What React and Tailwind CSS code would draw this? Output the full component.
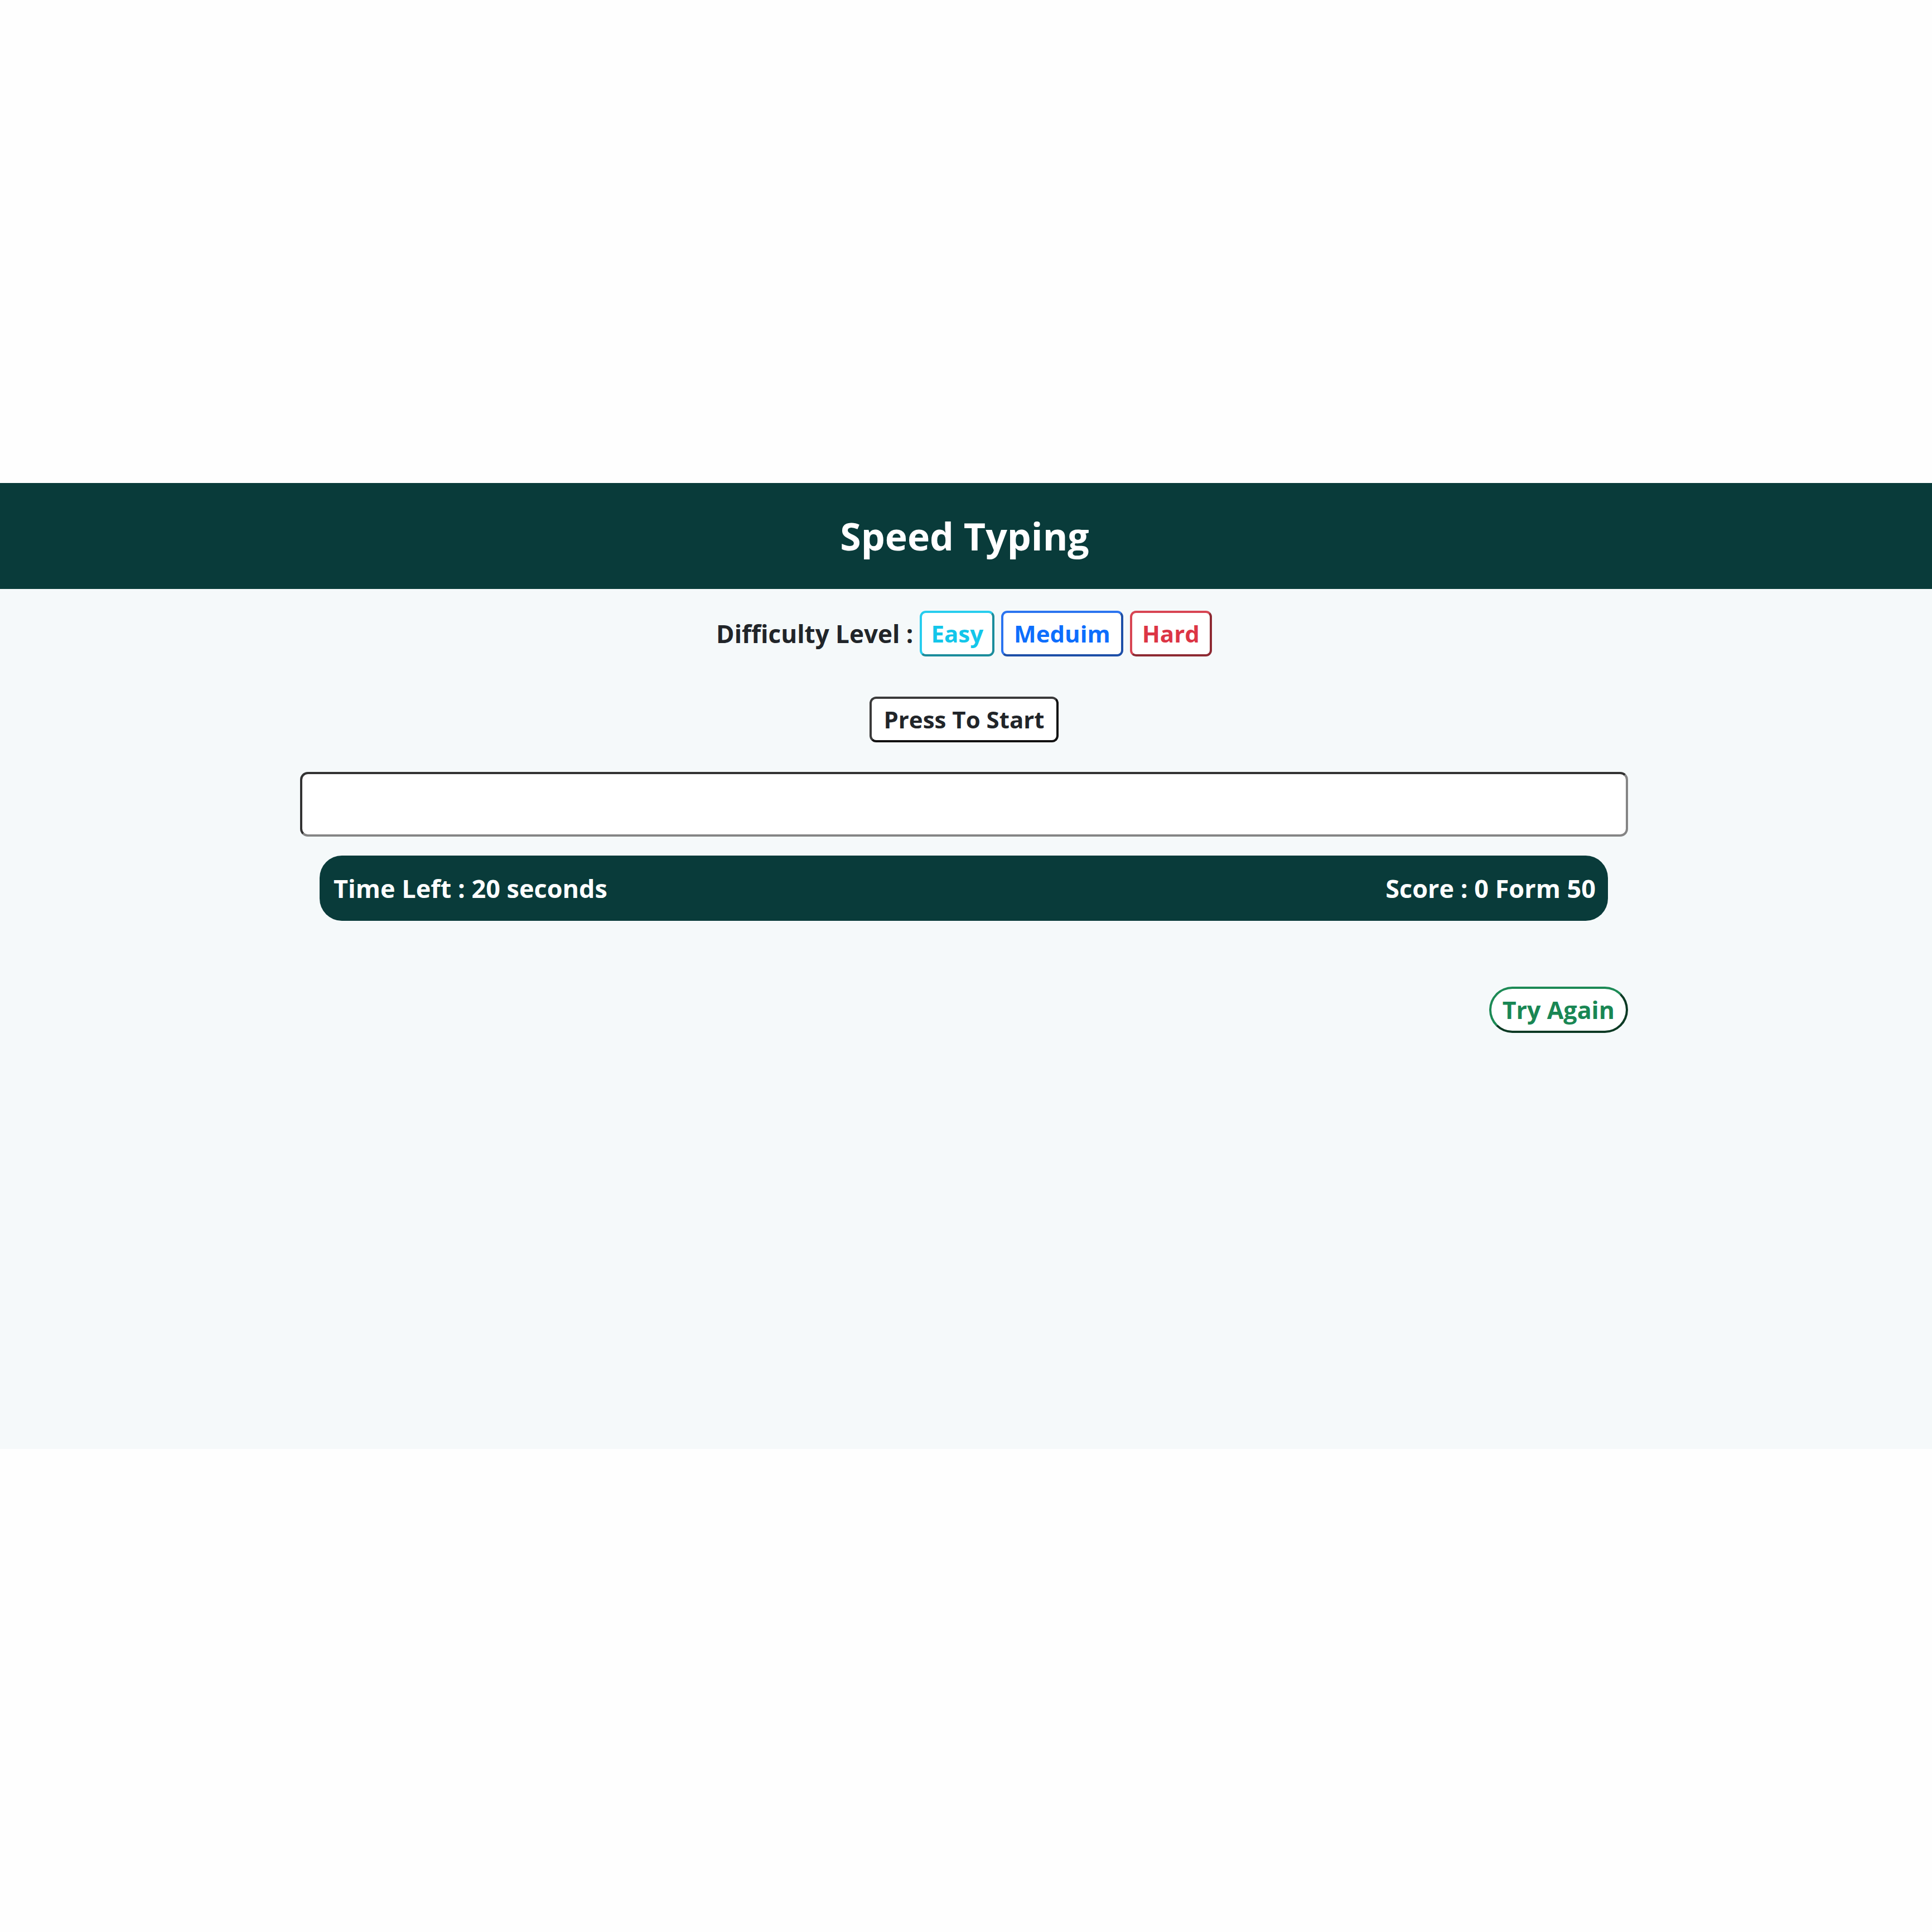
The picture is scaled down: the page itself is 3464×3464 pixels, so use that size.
import { useState } from "react";

const levels = [
  {
    name: "Easy",
    className:
      "px-[16px] text-[#13c6ea] border-t-[#28cdee] border-l-[#28cdee] border-r-[#1b8d9c] border-b-[#1b8d9c]",
  },
  {
    name: "Meduim",
    className:
      "px-[19px] text-[#0d6efd] border-t-[#2b74f0] border-l-[#2b74f0] border-r-[#1d4fa8] border-b-[#1d4fa8]",
  },
  {
    name: "Hard",
    className:
      "px-[18px] text-[#dc3545] border-t-[#d84553] border-l-[#d84553] border-r-[#8e2a33] border-b-[#8e2a33]",
  },
];

export default function App() {
  const [text, setText] = useState("");
  const [level, setLevel] = useState("Easy");

  return (
    <div className="min-h-screen flex flex-col justify-center bg-[#fefefe] font-['Open_Sans',sans-serif]">
      <div className="h-[1732px] bg-[#f5f9fa]">
        {/* Header */}
        <header className="h-[190px] bg-[#093b3a] flex items-center justify-center pr-[5px]">
          <h1 className="text-[68px] font-bold text-white leading-none">
            Speed Typing
          </h1>
        </header>

        <div className="pr-[7px]">
          <main className="w-[2381px] mx-auto flex flex-col">
            {/* Difficulty */}
            <div className="mt-[39px] flex items-center justify-center gap-[12px]">
              <span className="text-[44px] font-bold text-[#212529]">
                Difficulty Level :
              </span>
              {levels.map((l) => (
                <button
                  key={l.name}
                  onClick={() => setLevel(l.name)}
                  className={`h-[82px] bg-white border-[4px] rounded-[11px] text-[42px] font-bold leading-none ${l.className}`}
                >
                  {l.name}
                </button>
              ))}
            </div>

            {/* Start */}
            <div className="mt-[72px] flex justify-center">
              <button className="h-[82px] px-[21px] bg-white border-[4px] rounded-[12px] text-[42px] font-bold leading-none text-[#212529] border-t-[#3a3a3a] border-l-[#3a3a3a] border-r-[#111111] border-b-[#111111]">
                Press To Start
              </button>
            </div>

            {/* Input */}
            <input
              type="text"
              value={text}
              onChange={(e) => setText(e.target.value)}
              className="mt-[53px] h-[116px] w-full bg-white rounded-[14px] border-[4px] border-t-[#333333] border-l-[#333333] border-r-[#858585] border-b-[#858585] px-[20px] text-[42px] outline-none"
            />

            {/* Status bar */}
            <div className="mt-[34px] ml-[35px] mr-[36px] h-[117px] rounded-[40px] bg-[#093b3a] flex items-center justify-between pl-[25px] pr-[22px] text-white text-[45px] font-bold">
              <span>Time Left : 20 seconds</span>
              <span>Score : 0 Form 50</span>
            </div>

            {/* Try again */}
            <div className="mt-[118px] flex justify-end">
              <button className="h-[83px] px-[20px] bg-white rounded-full border-[4px] text-[43px] font-bold leading-none text-[#198754] border-t-[#1c8a55] border-l-[#1c8a55] border-r-[#0b3a24] border-b-[#0b3a24]">
                Try Again
              </button>
            </div>
          </main>
        </div>
      </div>
    </div>
  );
}
